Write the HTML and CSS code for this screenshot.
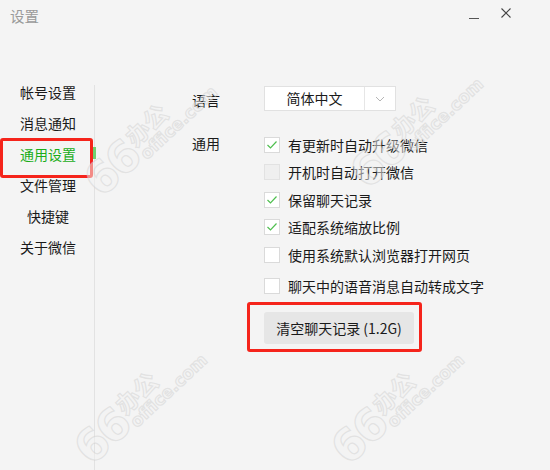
FILE: index.html
```html
<!DOCTYPE html>
<html lang="zh">
<head>
<meta charset="utf-8">
<title>设置</title>
<link rel="stylesheet" href="styles.css">
</head>
<body>
<div class="window">
  <div class="titlebar">
    <span class="title">设置</span>
    <div class="controls">
      <span class="ctl min"></span>
      <svg class="ctl close" width="10" height="10" viewBox="0 0 10 10"><path d="M0.5 0.5 L9.5 9.5 M9.5 0.5 L0.5 9.5" stroke="#444" stroke-width="1.1" fill="none"/></svg>
    </div>
  </div>
  <div class="main">
    <nav class="sidebar">
      <div class="nav-item">帐号设置</div>
      <div class="nav-item">消息通知</div>
      <div class="nav-item active">通用设置</div>
      <div class="nav-item">文件管理</div>
      <div class="nav-item">快捷键</div>
      <div class="nav-item">关于微信</div>
    </nav>
    <div class="divider"><span class="indicator"></span></div>
    <section class="content">
      <div class="label lang-label">语言</div>
      <div class="select">
        <span class="select-value">简体中文</span>
        <span class="select-arrow">
          <svg width="10" height="6" viewBox="0 0 10 6"><path d="M1 1 L5 5 L9 1" stroke="#b5b5b5" stroke-width="1" fill="none"/></svg>
        </span>
      </div>
      <div class="label gen-label">通用</div>
      <div class="options">
        <label class="option"><span class="box checked"><svg width="12" height="10" viewBox="0 0 12 10"><path d="M1.5 5 L4.5 8 L10.5 1.5" stroke="#4fbf4f" stroke-width="1.2" fill="none"/></svg></span>有更新时自动升级微信</label>
        <label class="option"><span class="box disabled"></span>开机时自动打开微信</label>
        <label class="option"><span class="box checked"><svg width="12" height="10" viewBox="0 0 12 10"><path d="M1.5 5 L4.5 8 L10.5 1.5" stroke="#4fbf4f" stroke-width="1.2" fill="none"/></svg></span>保留聊天记录</label>
        <label class="option"><span class="box checked"><svg width="12" height="10" viewBox="0 0 12 10"><path d="M1.5 5 L4.5 8 L10.5 1.5" stroke="#4fbf4f" stroke-width="1.2" fill="none"/></svg></span>适配系统缩放比例</label>
        <label class="option"><span class="box"></span>使用系统默认浏览器打开网页</label>
        <label class="option last"><span class="box"></span>聊天中的语音消息自动转成文字</label>
        <div class="btn-wrap">
          <button class="btn">清空聊天记录 (1.2G)</button>
        </div>
      </div>
    </section>
  </div>
  <div class="wm wm1"><span class="wm-big">66</span><span class="wm-stack"><span class="wm-cn">办公</span><span class="wm-en">office.com</span></span></div>
  <div class="wm wm2"><span class="wm-big">66</span><span class="wm-stack"><span class="wm-cn">办公</span><span class="wm-en">office.com</span></span></div>
  <div class="wm wm3"><span class="wm-big">66</span><span class="wm-stack"><span class="wm-cn">办公</span><span class="wm-en">office.com</span></span></div>
  <div class="wm wm4"><span class="wm-big">66</span><span class="wm-stack"><span class="wm-cn">办公</span><span class="wm-en">office.com</span></span></div>
</div>
</body>
</html>
```

FILE: styles.css
```css
* { box-sizing: border-box; }
html, body { margin: 0; padding: 0; }
body {
  width: 550px;
  height: 470px;
  background: #f4f4f4;
  font-family: "Noto Sans CJK SC", "Noto Sans", sans-serif;
  font-size: 14px;
  color: #1a1a1a;
  overflow: hidden;
}
.window {
  position: relative;
  width: 550px;
  height: 470px;
  display: flex;
  flex-direction: column;
  overflow: hidden;
}
.titlebar {
  height: 77px;
  display: flex;
  justify-content: space-between;
  align-items: flex-start;
  padding: 6px 0 0 10px;
}
.title {
  font-size: 14.5px;
  line-height: 20px;
  color: #9a9a9a;
}
.controls {
  display: flex;
  align-items: flex-start;
  padding-top: 2px;
  margin-right: 39px;
}
.min {
  display: block;
  width: 10px;
  height: 1px;
  background: #555;
  margin-top: 10px;
  margin-right: 22px;
}
.close { display: block; margin-top: 0; }

.main {
  flex: 1;
  display: flex;
}
.sidebar {
  width: 94px;
  display: flex;
  flex-direction: column;
}
.nav-item {
  position: relative;
  height: 31px;
  line-height: 31px;
  text-align: center;
  font-size: 14px;
  color: #1a1a1a;
  padding-left: 2px;
}
.nav-item.active { color: #1aad19; }
.nav-item.active::after {
  content: "";
  position: absolute;
  left: 0;
  top: -1px;
  width: 87px;
  height: 34px;
  border: 3px solid #f5241b;
  border-radius: 3px;
}
.divider {
  position: relative;
  width: 1px;
  margin-top: 8px;
  background: #e2e2e2;
}
.indicator {
  position: absolute;
  left: -1px;
  top: 62px;
  width: 3px;
  height: 12px;
  background: #6fd06f;
}
.content {
  flex: 1;
  display: grid;
  grid-template-columns: 72px auto;
  grid-template-rows: 25px auto;
  row-gap: 20px;
  align-content: start;
  padding: 9px 0 0 97px;
}
.label {
  font-size: 14px;
  line-height: 20px;
}
.lang-label { align-self: center; margin-top: 2px; }
.gen-label { margin-top: 2px; }
.select {
  width: 132px;
  height: 25px;
  display: flex;
  background: #fff;
  border: 1px solid #e1e1e1;
}
.select-value {
  width: 100px;
  text-align: center;
  line-height: 23px;
  font-size: 14px;
  border-right: 1px solid #e6e6e6;
}
.select-arrow {
  flex: 1;
  display: flex;
  align-items: center;
  justify-content: center;
}
.options {
  display: flex;
  flex-direction: column;
}
.option {
  height: 27.5px;
  display: flex;
  align-items: center;
  font-size: 14px;
  line-height: 20px;
}
.option.last { margin-top: 3.5px; }
.box {
  width: 16px;
  height: 16px;
  border: 1px solid #dadada;
  background: #fff;
  margin-right: 8px;
  display: flex;
  align-items: center;
  justify-content: center;
  flex-shrink: 0;
}
.box.disabled {
  background: #efefef;
  border-color: #e2e2e2;
}
.btn-wrap {
  position: relative;
  margin-top: 12px;
  width: 150px;
}
.btn-wrap::after {
  content: "";
  position: absolute;
  left: -17px;
  right: -8px;
  top: -10px;
  bottom: -8px;
  border: 3px solid #f5241b;
  border-radius: 3px;
}
.btn {
  display: block;
  width: 150px;
  height: 32px;
  border: none;
  border-radius: 3px;
  background: #e6e6e6;
  font-family: "Noto Sans CJK SC", "Noto Sans", sans-serif;
  font-size: 14px;
  color: #1a1a1a;
  padding: 0;
}

/* watermark overlay */
.wm {
  position: absolute;
  display: flex;
  align-items: center;
  transform: rotate(-43deg);
  transform-origin: center;
  pointer-events: none;
  color: rgba(242, 242, 242, 0.5);
  -webkit-text-stroke: 1.2px rgba(205, 205, 205, 0.45);
  font-family: "DejaVu Sans", "Noto Sans CJK SC", sans-serif;
  font-weight: bold;
  white-space: nowrap;
}
.wm-big { font-size: 44px; line-height: 44px; letter-spacing: -2px; }
.wm-stack { display: flex; flex-direction: column; margin-left: 2px; }
.wm-cn { font-size: 24px; line-height: 24px; font-family: "Noto Sans CJK SC", sans-serif; }
.wm-en { font-size: 17px; line-height: 18px; }
.wm1 { left: 60px; top: 380px; }
.wm2 { left: 317px; top: 380px; }
.wm3 { left: 70px; top: 112px; }
.wm4 { left: 336px; top: 104px; }
```
